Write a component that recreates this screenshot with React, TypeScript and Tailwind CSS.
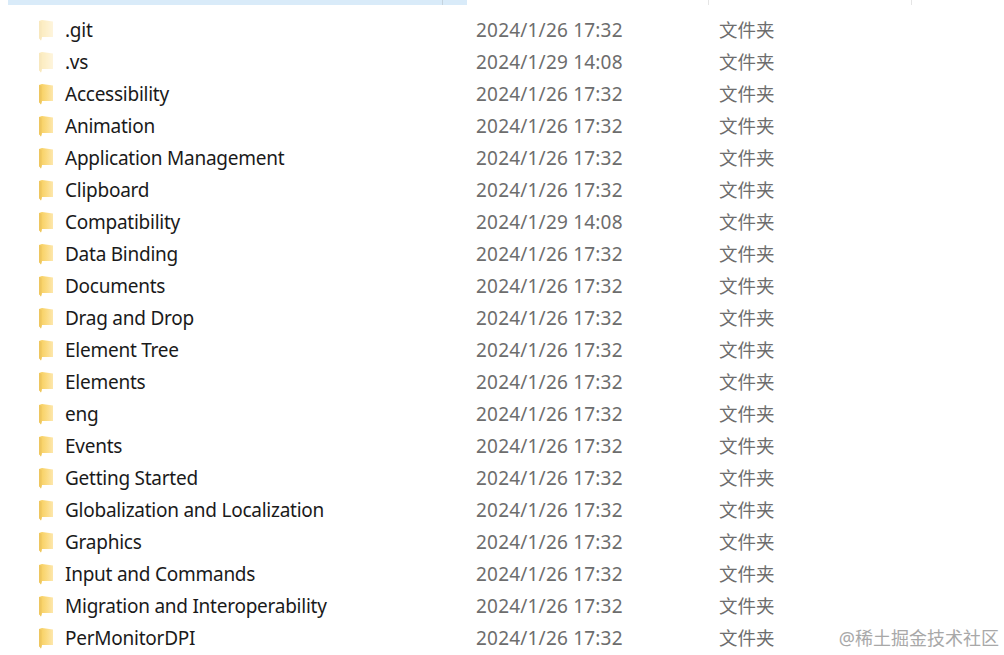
const folders = [
  { name: '.git', date: '2024/1/26 17:32', hidden: true },
  { name: '.vs', date: '2024/1/29 14:08', hidden: true },
  { name: 'Accessibility', date: '2024/1/26 17:32' },
  { name: 'Animation', date: '2024/1/26 17:32' },
  { name: 'Application Management', date: '2024/1/26 17:32' },
  { name: 'Clipboard', date: '2024/1/26 17:32' },
  { name: 'Compatibility', date: '2024/1/29 14:08' },
  { name: 'Data Binding', date: '2024/1/26 17:32' },
  { name: 'Documents', date: '2024/1/26 17:32' },
  { name: 'Drag and Drop', date: '2024/1/26 17:32' },
  { name: 'Element Tree', date: '2024/1/26 17:32' },
  { name: 'Elements', date: '2024/1/26 17:32' },
  { name: 'eng', date: '2024/1/26 17:32' },
  { name: 'Events', date: '2024/1/26 17:32' },
  { name: 'Getting Started', date: '2024/1/26 17:32' },
  { name: 'Globalization and Localization', date: '2024/1/26 17:32' },
  { name: 'Graphics', date: '2024/1/26 17:32' },
  { name: 'Input and Commands', date: '2024/1/26 17:32' },
  { name: 'Migration and Interoperability', date: '2024/1/26 17:32' },
  { name: 'PerMonitorDPI', date: '2024/1/26 17:32' },
]

function FolderIcon({ hidden }: { hidden?: boolean }) {
  return (
    <svg width="16" height="22" viewBox="0 0 16 22" className={hidden ? 'opacity-40' : ''}>
      <defs>
        <linearGradient id="folderFill" x1="0" y1="0" x2="1" y2="0">
          <stop offset="0" stopColor="#f6cc58" />
          <stop offset="0.55" stopColor="#fbdb82" />
          <stop offset="1" stopColor="#fde7ad" />
        </linearGradient>
      </defs>
      <path d="M1 2 L4 1 L15 2.5 L15 18 L4 18 L3 21.5 L1 19 Z" fill="url(#folderFill)" />
      <path d="M1 2 L3.5 3 L3.5 19 L3 21.5 L1 19 Z" fill="#eec65f" />
    </svg>
  )
}

export default function App() {
  return (
    <div className="relative h-[655px] w-[1004px] overflow-hidden bg-white font-['Noto_Sans','Noto_Sans_CJK_SC',sans-serif] text-[19px]">
      {/* Column header sliver */}
      <div className="flex h-[5px] pl-2">
        <div className="w-[434px] bg-[#d9ebf9]" />
        <div className="w-px bg-[#c5d3de]" />
        <div className="w-6 bg-[#d9ebf9]" />
        <div className="w-[242px] border-r border-[#e5e5e5]" />
        <div className="w-[203px] border-r border-[#e5e5e5]" />
      </div>

      <div className="pt-[9px]">
        {folders.map((f) => (
          <div key={f.name} className="flex h-8 items-center">
            <div className="flex w-[476px] items-center pl-[38px]">
              <FolderIcon hidden={f.hidden} />
              <span className="ml-[11px] tracking-[-0.25px] text-[#1a1a1a]">{f.name}</span>
            </div>
            <div className="w-[243px] tracking-[0.2px] text-[#6d6d6d]">{f.date}</div>
            <div className="text-[18.5px] text-[#6d6d6d]">文件夹</div>
          </div>
        ))}
      </div>

      {/* Watermark */}
      <div className="absolute right-[5px] bottom-[3px] text-[18px] text-[#a8a8a8]">@稀土掘金技术社区</div>
    </div>
  )
}
